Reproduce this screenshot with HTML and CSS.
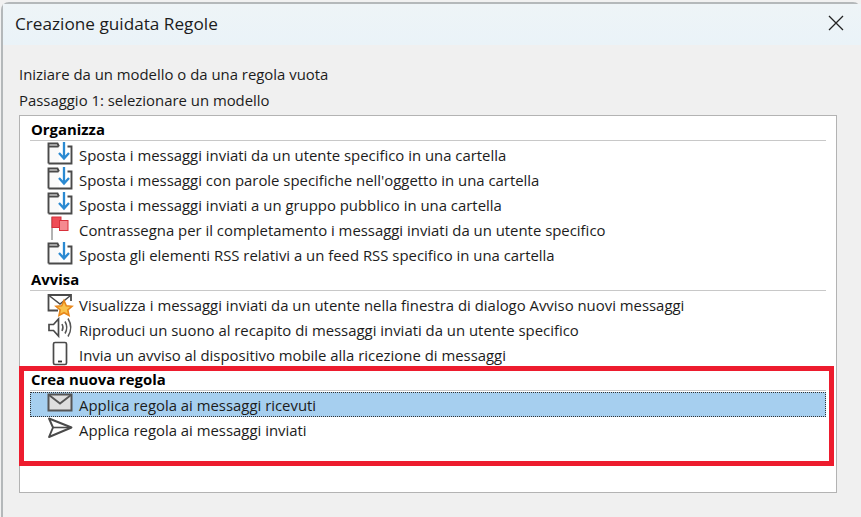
FILE: index.html
```html
<!DOCTYPE html>
<html lang="it">

<head>
    <meta charset="UTF-8">
    <title>Creazione guidata Regole</title>
    <link rel="stylesheet" href="styles.css">
</head>

<body>
    <svg class="defs" width="0" height="0">
        <symbol id="move" viewBox="0 0 28 25" overflow="visible">
            <path d="M2.500 4.500H13V21.500H2.500Z" fill="#fafafa" stroke="none" />
            <path d="M2.500 21.500V1.500H11.500L13 4.500" fill="none" stroke="#4a4a4a" stroke-width="1.900" />
            <path d="M2.500 4.500H12.500M21.500 4.500H25.500V21.500H2.500" fill="none" stroke="#4a4a4a" stroke-width="1.900" />
            <path d="M18 0V16M13 11L18 16.500L23 11" fill="none" stroke="#2b8ad2" stroke-width="2.300" />
        </symbol>
        <symbol id="flag" viewBox="0 0 28 25" overflow="visible">
            <path d="M6 0V23" stroke="#666" stroke-width="1" />
            <rect x="6" y="0" width="9" height="10.500" fill="#ee4d57" stroke="#d8313b" />
            <rect x="13.500" y="3.500" width="8.500" height="10" fill="#f58a90" stroke="#d8313b" />
        </symbol>
        <symbol id="alert" viewBox="0 0 28 25" overflow="visible">
            <path d="M12 18.500H2.500V3H25V9" fill="none" stroke="#4a4a4a" stroke-width="1.800" />
            <path d="M3 3.500L14 12L24.500 3.500" fill="none" stroke="#4a4a4a" stroke-width="1.500" />
            <path d="M18 8.500L20.300 13.700L26 14.300L21.800 18L23 23.500L18 20.700L13 23.500L14.200 18L10 14.300L15.700 13.700Z" fill="#f9c24a" stroke="#e8861a" stroke-width="1.600" />
        </symbol>
        <symbol id="sound" viewBox="0 0 28 25" overflow="visible">
            <path d="M3 7.500H7.500L12.500 2V19L7.500 13.500H3Z" fill="#fff" stroke="#4a4a4a" stroke-width="1.700" />
            <path d="M16 7Q18 10.500 16 14M19 4.500Q22.500 10.500 19 16.500M22 1.500Q27.500 10.500 22 19.500" fill="none" stroke="#555" stroke-width="1.500" />
        </symbol>
        <symbol id="phone" viewBox="0 0 28 25" overflow="visible">
            <rect x="7.500" y="0.500" width="13" height="22" rx="1.500" fill="#fff" stroke="#4a4a4a" stroke-width="1.700" />
            <path d="M12 19.500H16" stroke="#333" stroke-width="1.800" />
        </symbol>
        <symbol id="mail" viewBox="0 0 28 25" overflow="visible">
            <rect x="2.500" y="2.500" width="23" height="16" fill="#dedede" stroke="#555" stroke-width="2" />
            <path d="M3 3L14 11.500L25 3" fill="none" stroke="#555" stroke-width="1.800" />
        </symbol>
        <symbol id="send" viewBox="0 0 28 25" overflow="visible">
            <path d="M3 1.500L25.500 10.500L3 20L7 10.500Z" fill="#fff" stroke="#4a4a4a" stroke-width="1.900" stroke-linejoin="round" />
            <path d="M7 10.500H25" stroke="#4a4a4a" stroke-width="1.600" />
        </symbol>
    </svg>

    <div class="dialog">
        <div class="titlebar">
            <span class="title">Creazione guidata Regole</span>
            <svg class="close" width="16" height="16" viewBox="0 0 16 16">
                <path d="M1 1L15 15M15 1L1 15" stroke="#222" stroke-width="1.300" />
            </svg>
        </div>
        <div class="content">
            <p class="line">Iniziare da un modello o da una regola vuota</p>
            <p class="line">Passaggio 1: selezionare un modello</p>
            <div class="list">
                <div class="group-head">Organizza</div>
                <div class="row"><svg class="icon"><use href="#move" /></svg>Sposta i messaggi inviati da un utente specifico in una cartella</div>
                <div class="row"><svg class="icon"><use href="#move" /></svg>Sposta i messaggi con parole specifiche nell'oggetto in una cartella</div>
                <div class="row"><svg class="icon"><use href="#move" /></svg>Sposta i messaggi inviati a un gruppo pubblico in una cartella</div>
                <div class="row"><svg class="icon"><use href="#flag" /></svg>Contrassegna per il completamento i messaggi inviati da un utente specifico</div>
                <div class="row"><svg class="icon"><use href="#move" /></svg>Sposta gli elementi RSS relativi a un feed RSS specifico in una cartella</div>
                <div class="group-head">Avvisa</div>
                <div class="row"><svg class="icon"><use href="#alert" /></svg>Visualizza i messaggi inviati da un utente nella finestra di dialogo Avviso nuovi messaggi</div>
                <div class="row"><svg class="icon"><use href="#sound" /></svg>Riproduci un suono al recapito di messaggi inviati da un utente specifico</div>
                <div class="row"><svg class="icon"><use href="#phone" /></svg>Invia un avviso al dispositivo mobile alla ricezione di messaggi</div>
                <div class="group-head">Crea nuova regola</div>
                <div class="row selected"><svg class="icon"><use href="#mail" /></svg>Applica regola ai messaggi ricevuti</div>
                <div class="row"><svg class="icon"><use href="#send" /></svg>Applica regola ai messaggi inviati</div>
                <div class="highlight"></div>
            </div>
        </div>
    </div>
</body>

</html>
```

FILE: styles.css
```css
html,
body {
    height: 100%;
}

body {
    margin: 0;
    padding: 2px 0 0 1px;
    box-sizing: border-box;
    overflow: hidden;
    background-color: #f1f1f1;
    font-family: "Open Sans", "Noto Sans", sans-serif;
    font-size: 14.9px;
    color: #1c1c1c;
}

.defs {
    position: absolute;
}

.dialog {
    box-sizing: border-box;
    height: 515px;
    background-color: #f0f0f0;
    border: 2px solid #b4b8ba;
    border-right: none;
    border-bottom: none;
    border-top-left-radius: 8px;
    border-top-right-radius: 8px;
}

.titlebar {
    display: flex;
    justify-content: space-between;
    align-items: center;
    box-sizing: border-box;
    height: 41px;
    padding: 0 17px 3px 12px;
    background: linear-gradient(#eef4f7, #eaf3f8);
}

.title {
    font-size: 17.2px;
}

.content {
    padding: 16px 24px 0 16px;
}

.line {
    margin: 0;
    height: 26px;
    line-height: 26px;
}

.list {
    position: relative;
    box-sizing: border-box;
    height: 378px;
    margin-top: 2px;
    padding: 1px 10px 0;
    background-color: #fff;
    border: 1px solid #b3b3b3;
}

.group-head {
    box-sizing: border-box;
    height: 24px;
    margin-bottom: 1px;
    padding-left: 1px;
    line-height: 24px;
    font-weight: 700;
    color: #000;
    border-bottom: 1px solid #c8c8c8;
}

.row {
    display: flex;
    align-items: center;
    box-sizing: border-box;
    height: 25px;
    padding-left: 16px;
}

.selected {
    background-color: #a6cfef;
    outline: 1px dotted #333;
    outline-offset: -1px;
}

.icon {
    width: 28px;
    height: 25px;
    margin-right: 5px;
    flex: none;
    overflow: visible;
}

.highlight {
    position: absolute;
    left: -1px;
    top: 250px;
    width: 815px;
    height: 100px;
    box-sizing: border-box;
    border: 5px solid #ed1c2e;
}
```
